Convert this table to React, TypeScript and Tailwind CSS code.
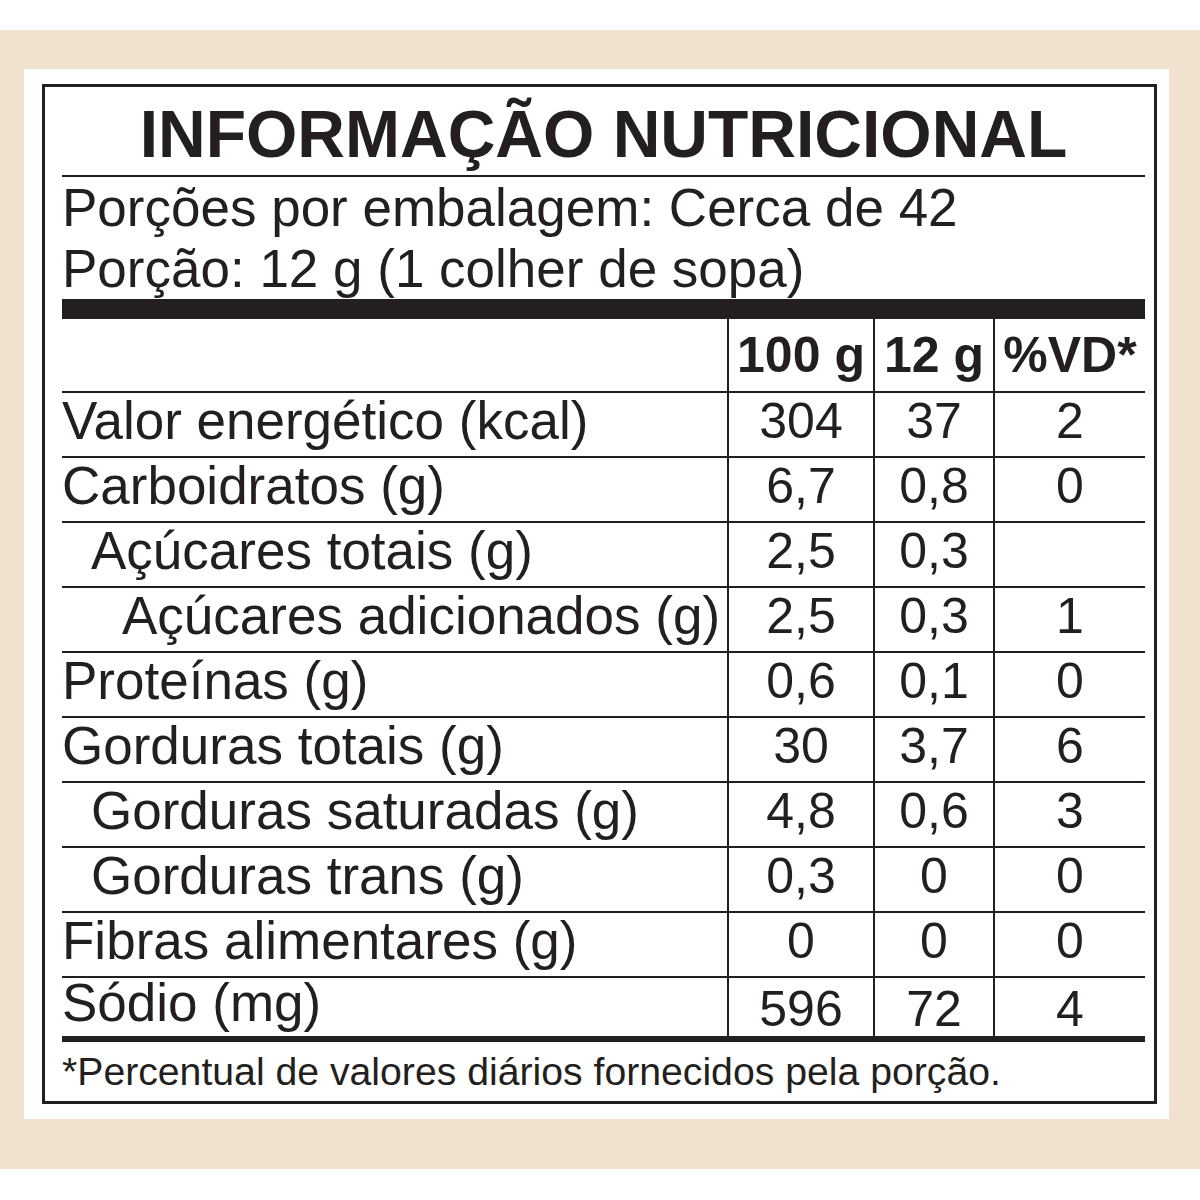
import React from "react"

type Row = {
  label: string
  indent?: 0 | 1 | 2
  a: string
  b: string
  c: string
  last?: boolean
}

const rows: Row[] = [
  { label: "Valor energético (kcal)", a: "304", b: "37", c: "2" },
  { label: "Carboidratos (g)", a: "6,7", b: "0,8", c: "0" },
  { label: "Açúcares totais (g)", indent: 1, a: "2,5", b: "0,3", c: "" },
  { label: "Açúcares adicionados (g)", indent: 2, a: "2,5", b: "0,3", c: "1" },
  { label: "Proteínas (g)", a: "0,6", b: "0,1", c: "0" },
  { label: "Gorduras totais (g)", a: "30", b: "3,7", c: "6" },
  { label: "Gorduras saturadas (g)", indent: 1, a: "4,8", b: "0,6", c: "3" },
  { label: "Gorduras trans (g)", indent: 1, a: "0,3", b: "0", c: "0" },
  { label: "Fibras alimentares (g)", a: "0", b: "0", c: "0" },
  { label: "Sódio (mg)", a: "596", b: "72", c: "4", last: true },
]

const indentClass = ["pl-0", "pl-[29px]", "pl-[60px]"]

function DataRow({ row }: { row: Row }) {
  const h = row.last ? "h-[58px]" : "h-[63px]"
  const num = `${h} border-l-2 border-[#231f20] text-center text-[50px] leading-[56px] ${row.last ? "pt-[3px]" : ""}`
  return (
    <div className="grid grid-cols-[665px_146px_120px_1fr] border-t-2 border-[#231f20]">
      <div className={`${h} ${indentClass[row.indent ?? 0]} text-[53px] leading-[56px] whitespace-nowrap ${row.last ? "-mt-[3px]" : ""}`}>
        {row.label}
      </div>
      <div className={num}>{row.a}</div>
      <div className={num}>{row.b}</div>
      <div className={num}>{row.c}</div>
    </div>
  )
}

export default function App() {
  return (
    <div
      className="w-[1200px] h-[1200px] bg-white pt-[30px] text-[#231f20]"
      style={{ fontFamily: '"Liberation Sans", Arial, sans-serif' }}
    >
      <div className="h-[1139px] bg-[#f0e2cf] pt-[39px] pl-[24px] pr-[31px]">
        <div className="h-[1050px] bg-white pt-[15px] pl-[18px] pr-[12px]">
          <div className="h-[1020px] border-[3px] border-[#231f20] pl-[17px] pr-[9px]">
            {/* title */}
            <div className="h-[88px] pt-[14px] text-center text-[66px] font-bold leading-[66px] whitespace-nowrap">
              INFORMAÇÃO NUTRICIONAL
            </div>
            <div className="h-[2px] bg-[#231f20]" />

            {/* portions */}
            <div className="text-[53px] leading-[61px] whitespace-nowrap">
              <div>Porções por embalagem: Cerca de 42</div>
              <div>Porção: 12 g (1 colher de sopa)</div>
            </div>
            <div className="h-[20px] bg-[#231f20]" />

            {/* header */}
            <div className="grid grid-cols-[665px_146px_120px_1fr] h-[72px] text-[50px] font-bold leading-[72px]">
              <div />
              <div className="border-l-2 border-[#231f20] text-center whitespace-nowrap">100 g</div>
              <div className="border-l-2 border-[#231f20] text-center whitespace-nowrap">12 g</div>
              <div className="border-l-2 border-[#231f20] text-center whitespace-nowrap">%VD*</div>
            </div>

            {rows.map((r) => (
              <DataRow key={r.label} row={r} />
            ))}

            <div className="h-[6px] bg-[#231f20]" />
            <div className="pt-[2px] text-[39.2px] leading-[56px] whitespace-nowrap">
              *Percentual de valores diários fornecidos pela porção.
            </div>
          </div>
        </div>
      </div>
    </div>
  )
}
